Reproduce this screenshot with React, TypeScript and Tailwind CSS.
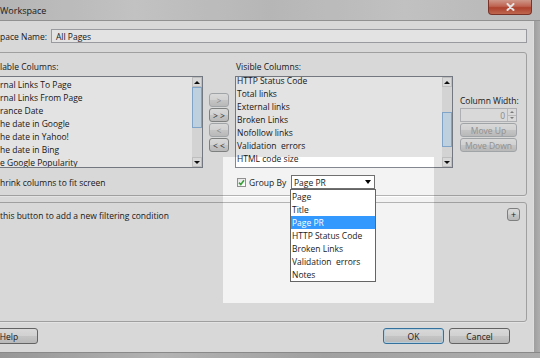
import React from 'react';

const available = [
  'rnal Links To Page',
  'rnal Links From Page',
  'rance Date',
  'he date in Google',
  'he date in Yahoo!',
  'he date in Bing',
  'e Google Popularity',
];

const visible = [
  'HTTP Status Code',
  'Total links',
  'External links',
  'Broken Links',
  'Nofollow links',
  'Validation  errors',
  'HTML code size',
  'Link Value',
];

const groupOptions = ['Page', 'Title', 'Page PR', 'HTTP Status Code', 'Broken Links', 'Validation  errors', 'Notes'];

const btn =
  'flex items-center justify-center rounded-[3px] border bg-[linear-gradient(to_bottom,#f4f4f4,#ebebeb_48%,#dddddd_52%,#d0d0d0)]';

const UpArrow = () => (
  <div className="h-0 w-0 border-x-[3px] border-b-[3px] border-x-transparent border-b-[#111]" />
);
const DownArrow = () => (
  <div className="h-0 w-0 border-x-[3px] border-t-[3px] border-x-transparent border-t-[#111]" />
);

const ScrollBar = ({ gap, thumb }: { gap: number; thumb: number }) => (
  <div className="flex h-full w-[10px] shrink-0 flex-col bg-[#ededed]">
    <div className="flex h-[10px] shrink-0 items-center justify-center border border-[#d6d6d6] bg-[#f3f3f3]">
      <UpArrow />
    </div>
    <div className="shrink-0" style={{ height: gap }} />
    <div
      className="shrink-0 border border-[#8fb9e0] bg-[#d6e9f9] bg-[radial-gradient(#a9cdee_0.6px,transparent_0.7px)] bg-[length:2px_2px]"
      style={{ height: thumb }}
    />
    <div className="flex-1" />
    <div className="flex h-[10px] shrink-0 items-center justify-center border border-[#d6d6d6] bg-[#f3f3f3]">
      <DownArrow />
    </div>
  </div>
);

export default function App() {
  return (
    <div className="relative flex h-[358px] w-[540px] flex-col overflow-hidden bg-[#f3f3f3] font-['Open_Sans',sans-serif] text-[8.5px] leading-[13px] text-[#1a1a1a]">
      {/* title bar */}
      <div className="flex h-[21px] shrink-0 items-start justify-between border-b border-[#a3a3a3] bg-[linear-gradient(90deg,#cbcbcb,#dadada_25%,#cdcdcd_50%,#d9d9d9_75%,#cecece)]">
        <span className="mt-[4px] text-[9px] text-[#222]">Workspace</span>
        <div className="mr-[8px] flex h-[15px] w-[44px] items-center justify-center rounded-b-[4px] border border-t-0 border-[#8a3a2e] bg-[linear-gradient(to_bottom,#e8ab9b,#d6705c_45%,#c24a35_55%,#d8745a)]">
          <svg width="9" height="8" viewBox="0 0 9 8">
            <path d="M1.5 1 L7.5 7 M7.5 1 L1.5 7" stroke="#fff" strokeWidth="2" strokeLinecap="round" />
          </svg>
        </div>
      </div>

      <div className="flex flex-1">
        {/* dialog body */}
        <div className="flex w-[533px] flex-col">
          <div className="mt-[8px] flex h-[14px] items-center">
            <span className="w-[51px] shrink-0">pace Name:</span>
            <div className="flex h-[14px] w-[476px] items-center border border-[#abadb3] bg-white pl-[4px]">All Pages</div>
          </div>

          {/* columns group */}
          <div className="-ml-[6px] mt-[9px] flex h-[144px] w-[533px] flex-col rounded-[3px] border border-[#b3b3b3] pl-[5px] shadow-[0_1px_0_#fff]">
            <div className="mt-[7px] flex h-[13px]">
              <span className="w-[236px] shrink-0">lable Columns:</span>
              <span>Visible Columns:</span>
            </div>
            <div className="mt-[3px] flex h-[92px] items-start">
              <div className="-ml-[3px] flex h-[92px] w-[206px] border border-[#828790] bg-white">
                <div className="flex-1 overflow-hidden pl-[2px] pt-[1px]">
                  {available.map((a) => (
                    <div key={a} className="h-[13px] whitespace-pre">{a}</div>
                  ))}
                </div>
                <ScrollBar gap={0} thumb={41} />
              </div>
              <div className="ml-[6px] mt-[17px] flex w-[20px] flex-col gap-[1px]">
                <div className={`${btn} h-[14px] border-[#b5b9bc] text-[#9a9a9a]`}>&gt;</div>
                <div className={`${btn} h-[14px] border-[#8e8f8f] text-[#333]`}>&gt; &gt;</div>
                <div className={`${btn} h-[14px] border-[#b5b9bc] text-[#9a9a9a]`}>&lt;</div>
                <div className={`${btn} h-[14px] border-[#8e8f8f] text-[#333]`}>&lt; &lt;</div>
              </div>
              <div className="ml-[6px] flex h-[92px] w-[218px] border border-[#828790] bg-white">
                <div className="flex-1 overflow-hidden pl-[1px]">
                  <div className="-mt-[3px]">
                    {visible.map((v) => (
                      <div key={v} className="h-[13px] whitespace-pre">{v}</div>
                    ))}
                  </div>
                </div>
                <ScrollBar gap={25} thumb={35} />
              </div>
              <div className="ml-[7px] mt-[18px] flex w-[57px] flex-col">
                <span className="h-[14px] whitespace-nowrap leading-[13px]">Column Width:</span>
                <div className="flex h-[14px] border border-[#c3c5c8] bg-[#f4f4f4]">
                  <span className="flex-1 pr-[2px] text-right text-[#9a9a9a]">0</span>
                  <div className="flex w-[9px] flex-col border-l border-[#d0d0d0]">
                    <div className="flex flex-1 items-center justify-center border-b border-[#d0d0d0]">
                      <div className="h-0 w-0 border-x-[2px] border-b-[2px] border-x-transparent border-b-[#888]" />
                    </div>
                    <div className="flex flex-1 items-center justify-center">
                      <div className="h-0 w-0 border-x-[2px] border-t-[2px] border-x-transparent border-t-[#888]" />
                    </div>
                  </div>
                </div>
                <div className={`${btn} mt-[1px] h-[14px] border-[#b5b9bc] text-[#a3a3a3]`}>Move Up</div>
                <div className={`${btn} mt-[1px] h-[14px] border-[#b5b9bc] text-[#a3a3a3]`}>Move Down</div>
              </div>
            </div>
            <div className="mt-[7px] flex h-[14px] items-center">
              <span className="w-[237px] shrink-0">hrink columns to fit screen</span>
              <div className="flex h-[9px] w-[9px] items-center justify-center border border-[#8f8f8f] bg-[linear-gradient(135deg,#e4e4e4,#fff)]">
                <svg width="7" height="7" viewBox="0 0 7 7">
                  <path d="M1 3.6 L2.8 5.5 L6 1.2" fill="none" stroke="#3aa03a" strokeWidth="1.6" />
                </svg>
              </div>
              <span className="ml-[3px] w-[42px]">Group By</span>
              <div className="relative">
                <div className="flex h-[14px] w-[84px] items-center justify-between border border-[#707070] bg-white pl-[2px] pr-[3px]">
                  <span>Page PR</span>
                  <div className="h-0 w-0 border-x-[3.5px] border-t-[4px] border-x-transparent border-t-black" />
                </div>
                <div className="absolute left-[-1px] top-[14px] z-20 w-[86px] border border-[#646464] bg-white">
                  {groupOptions.map((o) => (
                    <div
                      key={o}
                      className={`h-[13px] whitespace-pre pl-[1px] ${o === 'Page PR' ? 'bg-[#3399ff] text-white' : ''}`}
                    >
                      {o}
                    </div>
                  ))}
                </div>
              </div>
            </div>
          </div>

          {/* filter group */}
          <div className="-ml-[6px] mt-[6px] flex h-[120px] w-[533px] items-start justify-between rounded-[3px] border border-[#b3b3b3] pl-[5px] pr-[6px] pt-[5px] shadow-[0_1px_0_#fff]">
            <span className="mt-[1px]">this button to add a new filtering condition</span>
            <div className={`${btn} h-[13px] w-[13px] border-[#8e8f8f] text-[9px] leading-none`}>+</div>
          </div>

          {/* buttons */}
          <div className="mt-[6px] flex h-[16px] items-center">
            <div className={`${btn} -ml-[20px] h-[16px] w-[58px] border-[#707070] text-[#222]`}>Help</div>
            <div className="flex-1" />
            <div className={`${btn} h-[16px] w-[61px] border-[#3c7fb1] text-[#222] shadow-[inset_0_0_0_1px_#cde8f8]`}>OK</div>
            <div className={`${btn} ml-[5px] mr-[23px] h-[16px] w-[61px] border-[#707070] text-[#222]`}>Cancel</div>
          </div>
        </div>

        {/* right frame */}
        <div className="flex-1 border-l border-[#fafafa] bg-[linear-gradient(90deg,#b3b3b3,#c4c4c4)]" />
      </div>

      {/* bottom frame */}
      <div className="h-[6px] shrink-0 border-t border-[#9a9a9a] bg-[linear-gradient(90deg,#a9a9a9,#c9c9c9_30%,#b4b4b4_60%,#c3c3c3)]" />

      {/* spotlight dim */}
      <div className="pointer-events-none absolute left-[223px] top-[157px] z-10 h-[146px] w-[211px] shadow-[0_0_0_1200px_rgba(0,0,0,0.11)]" />
    </div>
  );
}
